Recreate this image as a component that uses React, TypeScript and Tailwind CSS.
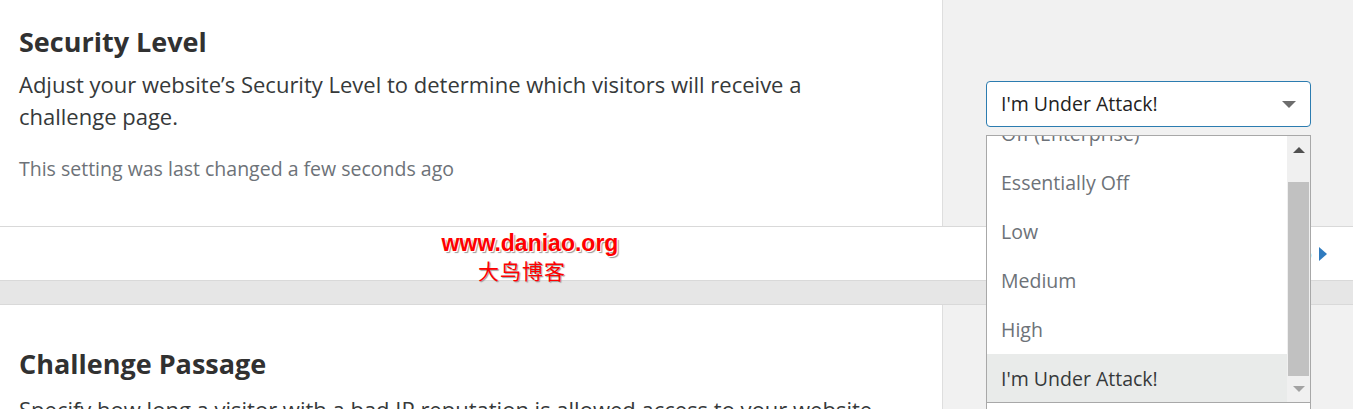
import { Fragment } from 'react';

const font = { fontFamily: '"Open Sans", "Noto Sans", sans-serif' };

const options = ['Off (Enterprise)', 'Essentially Off', 'Low', 'Medium', 'High', "I'm Under Attack!"];

function SecurityDropdown() {
  return (
    <div className="absolute left-[986px] top-[135px] w-[325px] h-[290px] bg-white border border-[#a8a8a8] overflow-hidden flex flex-col">
      <div className="h-[267px] flex overflow-hidden border-b border-[#a8a8a8]">
        <div className="flex-1 -mt-[27px]">
          {options.map((o, i) => {
            const selected = i === options.length - 1;
            return (
              <div
                key={o}
                className={
                  selected
                    ? 'h-[49px] flex items-center pl-[14px] text-[19.5px] text-[#36393a] bg-[#e9ebea]'
                    : 'h-[49px] flex items-center pl-[14px] text-[19.5px] text-[#6d7278]'
                }
              >
                {o}
              </div>
            );
          })}
        </div>
        <div className="w-[23px] bg-[#f0f0f0] flex flex-col items-center">
          <div className="h-[27px] flex items-center justify-center">
            <div className="w-0 h-0 border-l-[6px] border-r-[6px] border-b-[6px] border-l-transparent border-r-transparent border-b-[#505050]" />
          </div>
          <div className="w-[21px] h-[194px] mt-[19px] bg-[#c1c1c1]" />
          <div className="flex-1 flex items-center justify-center">
            <div className="w-0 h-0 border-l-[6px] border-r-[6px] border-t-[6px] border-l-transparent border-r-transparent border-t-[#a3a3a3]" />
          </div>
        </div>
      </div>
      <div className="flex-1 bg-white" />
    </div>
  );
}

export default function App() {
  return (
    <div className="relative w-[1353px] h-[409px] overflow-hidden bg-[#e6e6e6] text-[#36393a]" style={font}>
      <div className="flex h-[226px] bg-white">
        <div className="w-[942px] pl-[19px] pt-[24px]">
          <h2 className="text-[27px] font-bold leading-[36px] text-[#313131]">Security Level</h2>
          <p className="mt-[8px] max-w-[810px] text-[22px] leading-[32px]">
            Adjust your website’s Security Level to determine which visitors will receive a challenge page.
          </p>
          <p className="mt-[24px] text-[19.5px] leading-[26px] text-[#6d7278]">This setting was last changed a few seconds ago</p>
        </div>
        <div className="flex-1 bg-[#f1f1f1] border-l border-[#dedede] pl-[43px] pt-[81px]">
          <div className="w-[325px] h-[46px] bg-white border border-[#2c7cb0] rounded-[4px] flex items-center justify-between pl-[14px] pr-[14px]">
            <span className="text-[19.5px] text-[#222]">I'm Under Attack!</span>
            <div className="w-0 h-0 border-l-[7px] border-r-[7px] border-t-[7px] border-l-transparent border-r-transparent border-t-[#6d6d6d]" />
          </div>
        </div>
      </div>
      <div className="h-[55px] bg-white border-t border-b border-[#d9d9d9] flex items-center justify-end pr-[26px]">
        <span className="text-[17px] text-[#2f7bbf]">Help</span>
        <div className="ml-[7px] w-0 h-0 border-t-[7px] border-b-[7px] border-l-[8px] border-t-transparent border-b-transparent border-l-[#2f7bbf]" />
      </div>
      <div className="mt-[23px] flex h-[120px] bg-white border-t border-[#d9d9d9]">
        <div className="w-[942px] pl-[19px] pt-[41px]">
          <h2 className="text-[27px] font-bold leading-[36px] text-[#313131]">Challenge Passage</h2>
          <p className="mt-[11px] whitespace-nowrap text-[22px] leading-[32px]">
            Specify how long a visitor with a bad IP reputation is allowed access to your website
          </p>
        </div>
        <div className="flex-1 bg-[#f1f1f1] border-l border-[#dedede]" />
      </div>
      <SecurityDropdown />
      <div className="absolute left-[430px] top-[228px] w-[200px] flex flex-col items-center">
        <span
          className="text-[23px] font-bold leading-[30px] text-[#ff0000]"
          style={{ fontFamily: '"Liberation Sans", Arial, sans-serif', textShadow: '1px 1px 0 #fff, 2px 2px 1px #999' }}
        >
          www.daniao.org
        </span>
        <span
          className="-ml-[16px] text-[21px] leading-[24px] text-[#ff0000] tracking-[1px]"
          style={{ fontFamily: '"Noto Sans CJK SC", sans-serif', textShadow: '1px 1px 1px #999' }}
        >
          大鸟博客
        </span>
      </div>
    </div>
  );
}
